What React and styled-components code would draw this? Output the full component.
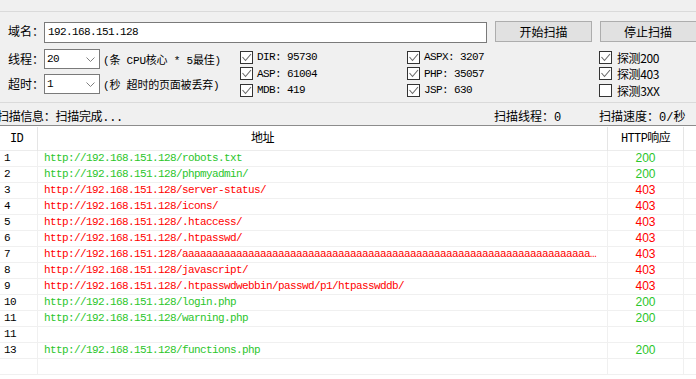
import React from "react";
import styled, { createGlobalStyle } from "styled-components";

const GlobalStyle = createGlobalStyle`
  html, body {
    margin: 0;
    padding: 0;
    background: #f0f0f0;
    overflow: hidden;
  }
  body {
    font-family: "Liberation Mono", "Noto Sans CJK SC", monospace;
    font-size: 12px;
    color: #000;
  }
`;

const MONO = `"Liberation Mono", "Noto Sans CJK SC", monospace`;
const CJK = `"Noto Sans CJK SC", "Liberation Sans", sans-serif`;

const TARGET = "http://192.168.151.128/";

const results = [
  { id: 1, path: "robots.txt", code: 200 },
  { id: 2, path: "phpmyadmin/", code: 200 },
  { id: 3, path: "server-status/", code: 403 },
  { id: 4, path: "icons/", code: 403 },
  { id: 5, path: ".htaccess/", code: 403 },
  { id: 6, path: ".htpasswd/", code: 403 },
  { id: 7, path: "a".repeat(120), code: 403 },
  { id: 8, path: "javascript/", code: 403 },
  { id: 9, path: ".htpasswdwebbin/passwd/p1/htpasswddb/", code: 403 },
  { id: 10, path: "login.php", code: 200 },
  { id: 11, path: "warning.php", code: 200 },
  { id: 11, path: null, code: null },
  { id: 13, path: "functions.php", code: 200 },
  { id: null, path: null, code: null },
];

const options = [
  [
    { label: "DIR: 95730", on: true },
    { label: "ASP: 61004", on: true },
    { label: "MDB: 419", on: true },
  ],
  [
    { label: "ASPX: 3207", on: true },
    { label: "PHP: 35057", on: true },
    { label: "JSP: 630", on: true },
  ],
  [
    { label: "探测200", on: true },
    { label: "探测403", on: true },
    { label: "探测3XX", on: false },
  ],
];

export default function App() {
  return (
    <Window>
      <GlobalStyle />
      <TopStrip />
      <Form>
        <DomainRow>
          <Label>域名：</Label>
          <TextInput>192.168.151.128</TextInput>
          <Button>开始扫描</Button>
          <Button wide>停止扫描</Button>
        </DomainRow>
        <OptionsRow>
          <Settings>
            <SettingRow>
              <Label>线程：</Label>
              <Select value="20" />
              <Hint>(条 CPU核心 * 5最佳)</Hint>
            </SettingRow>
            <SettingRow>
              <Label>超时：</Label>
              <Select value="1" />
              <Hint>(秒 超时的页面被丢弃)</Hint>
            </SettingRow>
          </Settings>
          {options.map((col, i) => (
            <CheckColumn key={i} width={i === 0 ? 167 : i === 1 ? 192 : 97}>
              {col.map(opt => (
                <CheckRow key={opt.label}>
                  <CheckBox on={opt.on} />
                  <CheckLabel cjk={i === 2}>{opt.label}</CheckLabel>
                </CheckRow>
              ))}
            </CheckColumn>
          ))}
        </OptionsRow>
      </Form>
      <StatusBar>
        <StatusInfo>扫描信息：扫描完成...</StatusInfo>
        <StatusThreads>扫描线程：0</StatusThreads>
        <StatusSpeed>扫描速度：0/秒</StatusSpeed>
      </StatusBar>
      <Table>
        <HeaderRow>
          <HeadCell>ID</HeadCell>
          <HeadCell address>地址</HeadCell>
          <HeadCell center>HTTP响应</HeadCell>
          <HeadCell last />
        </HeaderRow>
        {results.map((r, i) => {
          const color = r.code === 200 ? "#2bc62b" : "#ff0000";
          return (
            <Row key={i}>
              <IdCell>{r.id}</IdCell>
              <UrlCell color={color}>{r.path !== null ? TARGET + r.path : ""}</UrlCell>
              <CodeCell color={color}>{r.code}</CodeCell>
              <Cell last />
            </Row>
          );
        })}
      </Table>
    </Window>
  );
}

function Select({ value }) {
  return (
    <SelectBox>
      <span>{value}</span>
      <svg width="9" height="6" viewBox="0 0 9 6">
        <polyline points="0.5,0.5 4.5,4.5 8.5,0.5" fill="none" stroke="#808080" strokeWidth="1" />
      </svg>
    </SelectBox>
  );
}

function CheckBox({ on }) {
  return (
    <Box>
      {on && (
        <svg width="11" height="11" viewBox="0 0 11 11">
          <polyline points="1.5,5 4.5,8.5 10,2" fill="none" stroke="#6a6a6a" strokeWidth="1.1" />
        </svg>
      )}
    </Box>
  );
}

const Window = styled.div`
  width: 696px;
  height: 379px;
  overflow: hidden;
  display: flex;
  flex-direction: column;
`;

const TopStrip = styled.div`
  height: 11px;
  flex-shrink: 0;
  border-bottom: 1px solid #dadada;
`;

const Form = styled.div`
  height: 81px;
  flex-shrink: 0;
  padding-top: 9px;
  border-bottom: 1px solid #dadada;
  box-sizing: content-box;
`;

const DomainRow = styled.div`
  display: flex;
  align-items: flex-start;
  height: 21px;
`;

const Label = styled.div`
  font-family: ${CJK};
  font-size: 12px;
  width: 36px;
  padding-left: 8px;
  flex-shrink: 0;
  line-height: 20px;
`;

const TextInput = styled.div`
  width: 443px;
  height: 21px;
  margin-top: 1px;
  box-sizing: border-box;
  flex-shrink: 0;
  background: #fff;
  border: 1px solid #7a7a7a;
  font-family: ${MONO};
  font-size: 11px;
  letter-spacing: -0.6px;
  line-height: 19px;
  padding-left: 3px;
`;

const Button = styled.div`
  width: ${p => (p.wide ? 110 : 97)}px;
  height: 21px;
  margin-left: 8px;
  box-sizing: border-box;
  flex-shrink: 0;
  background: #e1e1e1;
  border: 1px solid #adadad;
  font-family: ${CJK};
  font-size: 12px;
  line-height: 19px;
  text-align: center;
  padding-right: ${p => (p.wide ? 14 : 0)}px;
`;

const OptionsRow = styled.div`
  display: flex;
  margin-top: 7px;
`;

const Settings = styled.div`
  width: 240px;
  flex-shrink: 0;
  display: flex;
  flex-direction: column;
  gap: 5px;
`;

const SettingRow = styled.div`
  display: flex;
  align-items: center;
  height: 20px;
`;

const SelectBox = styled.div`
  width: 56px;
  height: 20px;
  box-sizing: border-box;
  flex-shrink: 0;
  background: #fff;
  border: 1px solid #7a7a7a;
  display: flex;
  align-items: center;
  justify-content: space-between;
  padding: 0 4px 0 2px;
  font-family: ${MONO};
  font-size: 11px;
  letter-spacing: -0.6px;
  svg {
    margin-top: 2px;
  }
`;

const Hint = styled.div`
  font-family: ${MONO};
  font-size: 11px;
  letter-spacing: -0.2px;
  margin-left: 3px;
  white-space: nowrap;
`;

const CheckColumn = styled.div`
  width: ${p => p.width}px;
  flex-shrink: 0;
  display: flex;
  flex-direction: column;
`;

const CheckRow = styled.div`
  display: flex;
  align-items: center;
  height: 16.5px;
`;

const Box = styled.div`
  width: 13px;
  height: 13px;
  box-sizing: border-box;
  border: 1px solid #333;
  background: #fff;
  display: flex;
  align-items: center;
  justify-content: center;
  flex-shrink: 0;
`;

const CheckLabel = styled.span`
  font-family: ${p => (p.cjk ? CJK : MONO)};
  font-size: ${p => (p.cjk ? 12 : 11)}px;
  letter-spacing: ${p => (p.cjk ? -0.4 : -0.6)}px;
  margin-left: ${p => (p.cjk ? 5 : 4)}px;
  white-space: nowrap;
`;

const StatusBar = styled.div`
  height: 22px;
  flex-shrink: 0;
  display: flex;
  align-items: center;
  padding-top: 3px;
  box-sizing: border-box;
  font-family: ${MONO};
  font-size: 12px;
  white-space: nowrap;
`;

const StatusInfo = styled.div`
  margin-left: -3px;
  width: 497px;
  flex-shrink: 0;
  letter-spacing: -0.3px;
`;

const StatusThreads = styled.div`
  width: 105px;
  flex-shrink: 0;
`;

const StatusSpeed = styled.div`
  flex-shrink: 0;
`;

const Table = styled.div`
  flex: 1;
  background: #fff;
  border-top: 1px solid #8c8c8c;
`;

const COLS = "38px 570px 76px 1fr";

const HeaderRow = styled.div`
  display: grid;
  grid-template-columns: ${COLS};
  height: 25px;
  border-bottom: 1px solid #ececec;
  box-sizing: border-box;
`;

const HeadCell = styled.div`
  border-right: ${p => (p.last ? "none" : "1px solid #e5e5e5")};
  margin-top: 1px;
  font-family: ${MONO};
  font-size: 12px;
  letter-spacing: -0.6px;
  line-height: 24px;
  padding-left: ${p => (p.address ? 213 : p.center ? 0 : 10)}px;
  text-align: ${p => (p.center ? "center" : "left")};
  white-space: nowrap;
`;

const Row = styled.div`
  display: grid;
  grid-template-columns: ${COLS};
  height: 16px;
  box-sizing: border-box;
  border-bottom: 1px solid #f0f0f0;
`;

const Cell = styled.div`
  border-right: ${p => (p.last ? "none" : "1px solid #f0f0f0")};
  overflow: hidden;
  white-space: nowrap;
  line-height: 15px;
`;

const IdCell = styled(Cell)`
  font-family: ${MONO};
  font-size: 11px;
  letter-spacing: -0.6px;
  padding-left: 4px;
`;

const UrlCell = styled(Cell)`
  color: ${p => p.color};
  font-family: ${MONO};
  font-size: 11px;
  letter-spacing: -0.6px;
  padding-left: 6px;
  padding-right: 6px;
  text-overflow: ellipsis;
`;

const CodeCell = styled(Cell)`
  color: ${p => p.color};
  font-family: "Liberation Sans", sans-serif;
  font-size: 12px;
  text-align: center;
`;
